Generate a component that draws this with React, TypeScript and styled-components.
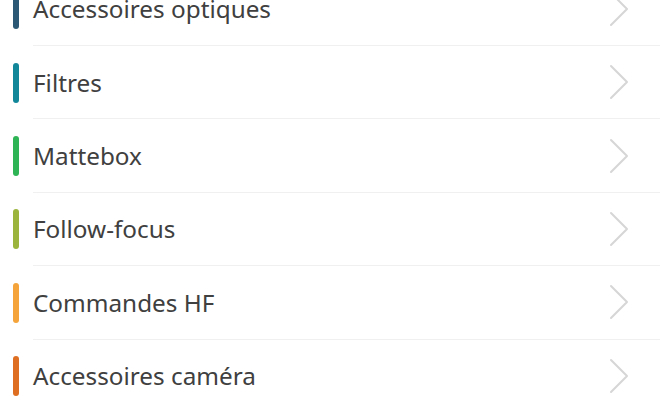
import styled, { createGlobalStyle } from 'styled-components';

type Category = {
  label: string;
  color: string;
};

const categories: Category[] = [
  { label: 'Accessoires optiques', color: '#2b5874' },
  { label: 'Filtres', color: '#13879a' },
  { label: 'Mattebox', color: '#2fb455' },
  { label: 'Follow-focus', color: '#9ab43c' },
  { label: 'Commandes HF', color: '#f4a43a' },
  { label: 'Accessoires caméra', color: '#de6f22' },
];

const GlobalStyle = createGlobalStyle`
  html, body {
    margin: 0;
    padding: 0;
    background: #ffffff;
    overflow: hidden;
  }
`;

const Chevron = () => (
  <svg width="20" height="36" viewBox="0 0 20 36" fill="none">
    <path d="M2 2 L18 18 L2 34" stroke="#d6d6d6" strokeWidth="2" strokeLinecap="round" strokeLinejoin="round" />
  </svg>
);

export default function App() {
  return (
    <>
      <GlobalStyle />
      <List>
        {categories.map((c) => (
          <Row key={c.label}>
            <Bar $color={c.color} />
            <Content>
              <Label>{c.label}</Label>
              <Chevron />
            </Content>
          </Row>
        ))}
      </List>
    </>
  );
}

const List = styled.div`
  display: flex;
  flex-direction: column;
  margin-top: -27.4px;
  width: 660px;
  font-family: 'Noto Sans', 'Open Sans', sans-serif;
`;

const Row = styled.div`
  display: flex;
  align-items: center;
  height: 73.4px;
`;

const Bar = styled.div<{ $color: string }>`
  flex: none;
  width: 6px;
  height: 40px;
  margin-left: 13px;
  border-radius: 3px;
  background: ${(p) => p.$color};
`;

const Content = styled.div`
  flex: 1;
  align-self: stretch;
  display: flex;
  align-items: center;
  justify-content: space-between;
  margin-left: 14px;
  padding-right: 31px;
  border-bottom: 1px solid #f0f0f0;
`;

const Label = styled.span`
  font-size: 24.3px;
  color: #404040;
`;
